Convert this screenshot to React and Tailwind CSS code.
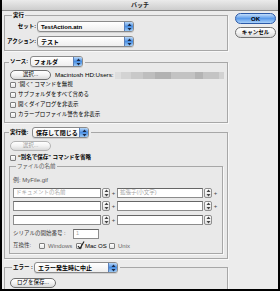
import React from 'react';

// シンプルなAqua風の部品
const FONT = "font-['Liberation_Sans','Noto_Sans_CJK_JP',sans-serif]";

function Arrows({ color = '#1b2a48' }) {
  return (
    <svg width="5" height="8" viewBox="0 0 5 8">
      <path d="M2.5 0.5 L4.5 3 L0.5 3 Z" fill={color} />
      <path d="M0.5 5 L4.5 5 L2.5 7.5 Z" fill={color} />
    </svg>
  );
}

function Popup({ text, className = '' }) {
  return (
    <div className={`flex h-[11px] items-stretch overflow-hidden rounded-[3px] border border-[#8a8a8a] bg-gradient-to-b from-white to-[#eeeeee] shadow-[0_1px_0_#d0d0d0] ${className}`}>
      <div className="flex flex-1 items-center pl-[3px] text-[6px] font-bold leading-none text-black">{text}</div>
      <div className="flex w-[9px] items-center justify-center border-l border-[#5b7fb8] bg-gradient-to-b from-[#b9d8f8] via-[#4a8fe2] to-[#9ccaf6]">
        <Arrows />
      </div>
    </div>
  );
}

function Stepper() {
  return (
    <div className="flex h-[10px] w-[8px] items-center justify-center rounded-[2px] border border-[#8f8f8f] bg-gradient-to-b from-white to-[#e2e2e2]">
      <Arrows color="#444" />
    </div>
  );
}

function PillButton({ children, className = '', disabled = false }) {
  return (
    <div className={`flex h-[10px] items-center justify-center rounded-full border bg-gradient-to-b from-white via-[#f2f2f2] to-[#d9d9d9] text-[5.5px] leading-none ${disabled ? 'border-[#b4b4b4] text-[#9a9a9a]' : 'border-[#6f6f6f] text-black'} ${className}`}>
      {children}
    </div>
  );
}

function Check({ checked = false }) {
  return (
    <div className="relative h-[6px] w-[6px] shrink-0 rounded-[1px] border border-[#7e7e7e] bg-gradient-to-b from-white to-[#e6e6e6]">
      {checked && (
        <svg className="absolute -top-[3px] left-0" width="8" height="9" viewBox="0 0 8 9">
          <path d="M1 5 L3 7.5 L7 0.5" stroke="#222" strokeWidth="1.2" fill="none" />
        </svg>
      )}
    </div>
  );
}

function CheckRow({ label, className = '' }) {
  return (
    <div className={`flex h-[10px] items-center gap-[2px] ${className}`}>
      <Check />
      <span className="text-[5.5px] leading-none text-black">{label}</span>
    </div>
  );
}

function Field({ className = '', placeholder = '' }) {
  return (
    <div className={`flex h-[10px] items-center border border-[#8c8c8c] border-t-[#666] bg-white pl-[2px] text-[5.5px] leading-none text-[#a8a8a8] ${className}`}>
      {placeholder}
    </div>
  );
}

function NameRow({ left = '', right = '', plus = true }) {
  return (
    <div className="flex h-[10px] items-center">
      <Field className="w-[88px]" placeholder={left} />
      <div className="ml-[1px]"><Stepper /></div>
      <span className="w-[7px] text-center text-[6px] leading-none text-[#444]">+</span>
      <Field className="w-[86px]" placeholder={right} />
      <div className="ml-[1px]"><Stepper /></div>
      {plus && <span className="w-[7px] text-center text-[6px] leading-none text-[#444]">+</span>}
    </div>
  );
}

const boxCls = 'border border-[#a7a7a7] bg-[#e9e9e9] shadow-[1px_1px_0_#f8f8f8]';

const mosaic = [
  ['w-[6px]', 'bg-[#dedede]'],
  ['w-[10px]', 'bg-[#d3d3d3]'],
  ['w-[12px]', 'bg-[#c9c9c9]'],
  ['w-[12px]', 'bg-[#bebebe]'],
  ['w-[16px]', 'bg-[#b2b2b2]'],
  ['w-[24px]', 'bg-[#c3c3c3]'],
  ['w-[8px]', 'bg-[#b4b4b4]'],
  ['w-[16px]', 'bg-[#c4c4c4]'],
  ['w-[5px]', 'bg-[#d2d2d2]'],
];

export default function App() {
  return (
    <div className={`flex h-[291px] w-[280px] flex-col overflow-hidden border-x-2 border-b-2 border-black bg-[#ececec] ${FONT}`}>
      {/* タイトルバー */}
      <div className="flex h-[11px] shrink-0 items-center justify-center border-b border-[#8c8c8c] bg-gradient-to-b from-[#ebebeb] to-[#cdcdcd]">
        <span className="text-[6px] font-bold leading-none text-[#222]">バッチ</span>
      </div>

      <div className="flex pl-[2px]">
        {/* 左カラム */}
        <div className="w-[224px]">
          {/* 実行 */}
          <div className="relative z-10 flex h-[9px] items-center pl-[8px]">
            <span className="bg-[#ececec] px-[1px] text-[5.5px] font-bold leading-none">実行</span>
          </div>
          <div className={`-mt-[5px] px-0 pt-[5px] pb-[3px] ${boxCls}`}>
            <div className="flex h-[11px] items-center">
              <span className="w-[31px] text-right text-[5.5px] font-bold leading-none">セット:</span>
              <Popup text="TestAction.atn" className="ml-[1px] w-[97px]" />
            </div>
            <div className="mt-[4px] flex h-[11px] items-center">
              <span className="w-[31px] text-right text-[5.5px] font-bold leading-none">アクション:</span>
              <Popup text="テスト" className="ml-[1px] w-[97px]" />
            </div>
          </div>

          {/* ソース */}
          <div className="relative z-10 mt-[5px] flex h-[11px] items-center pl-[5px]">
            <span className="w-[21px] bg-[#ececec] pl-[1px] text-[5.5px] font-bold leading-none">ソース:</span>
            <Popup text="フォルダ" className="w-[53px]" />
            <span className="w-[2px] self-stretch bg-[#ececec]" />
          </div>
          <div className={`-mt-[5px] pt-[7px] pb-[2px] pl-[5px] ${boxCls}`}>
            <div className="flex h-[10px] items-center">
              <PillButton className="w-[41px]">選択...</PillButton>
              <span className="ml-[4px] whitespace-nowrap text-[6.2px] leading-none text-black">Macintosh HD:Users:</span>
              <div className="ml-[2px] flex h-[7px]">
                {mosaic.map(([w, c], i) => (
                  <span key={i} className={`${w} ${c} h-full`} />
                ))}
              </div>
            </div>
            <CheckRow label="“開く” コマンドを無視" />
            <CheckRow label="サブフォルダをすべて含める" />
            <CheckRow label="開くダイアログを非表示" />
            <CheckRow label="カラープロファイル警告を非表示" />
          </div>

          {/* 実行後 */}
          <div className="relative z-10 mt-[4px] flex h-[11px] items-center pl-[5px]">
            <span className="w-[23px] bg-[#ececec] pl-[1px] text-[5.5px] font-bold leading-none">実行後:</span>
            <Popup text="保存して閉じる" className="w-[57px]" />
            <span className="w-[2px] self-stretch bg-[#ececec]" />
          </div>
          <div className={`-mt-[6px] pt-[8px] pb-[4px] ${boxCls}`}>
            <div className="pl-[5px]">
              <PillButton disabled className="w-[41px]">選択...</PillButton>
            </div>
            <CheckRow className="mt-[2px] h-[9px] pl-[5px]" label={<span className="font-bold">“別名で保存” コマンドを省略</span>} />

            {/* ファイルの名前 */}
            <div className="mx-[4px]">
              <div className="relative z-10 flex h-[7px] items-center pl-[7px]">
                <span className="bg-[#e9e9e9] px-[1px] text-[5.5px] leading-none text-[#555]">ファイルの名前</span>
              </div>
              <div className={`-mt-[4px] pt-[8px] pb-[3px] pl-[3px] ${boxCls}`}>
                <div className="flex h-[10px] items-center text-[6px] leading-none text-[#555]">例: MyFile.gif</div>
                <div className="mt-[3px]"><NameRow left="ドキュメントの名前" right="拡張子(小文字)" /></div>
                <div className="mt-[3px]"><NameRow /></div>
                <div className="mt-[4px]"><NameRow plus={false} /></div>
                <div className="mt-[4px] flex h-[9px] items-center">
                  <span className="w-[60px] text-[5.5px] leading-none text-[#333]">シリアルの開始番号 :</span>
                  <Field className="h-[9px] w-[26px]" placeholder="1" />
                </div>
                <div className="mt-[3px] flex h-[9px] items-center text-[5.5px] leading-none text-[#333]">
                  <span className="w-[26px]">互換性:</span>
                  <Check />
                  <span className="ml-[3px] w-[28px] text-[6px] text-[#666]">Windows</span>
                  <Check checked />
                  <span className="ml-[3px] w-[24px] text-[6px] text-black">Mac OS</span>
                  <Check />
                  <span className="ml-[3px] text-[6px] text-[#666]">Unix</span>
                </div>
              </div>
            </div>
          </div>

          {/* エラー */}
          <div className="relative z-10 mt-[3px] flex h-[11px] items-center pl-[8px]">
            <span className="w-[22px] bg-[#ececec] pl-[1px] text-[5.5px] font-bold leading-none">エラー :</span>
            <Popup text="エラー発生時に中止" className="w-[84px]" />
            <span className="w-[2px] self-stretch bg-[#ececec]" />
          </div>
          <div className={`-mt-[6px] pt-[10px] pb-[2px] pl-[5px] ${boxCls}`}>
            <PillButton className="w-[46px]">ログを保存...</PillButton>
          </div>
        </div>

        {/* 右カラム */}
        <div className="ml-[7px] flex flex-col gap-[3px] pt-[2px]">
          <div className="flex h-[11px] w-[41px] items-center justify-center rounded-full border border-[#2c5aa8] bg-gradient-to-b from-[#c4defa] via-[#5b9bea] to-[#a9d0f8] text-[6px] font-bold leading-none text-black">
            OK
          </div>
          <PillButton className="h-[11px] w-[41px] font-bold">キャンセル</PillButton>
        </div>
      </div>
    </div>
  );
}
